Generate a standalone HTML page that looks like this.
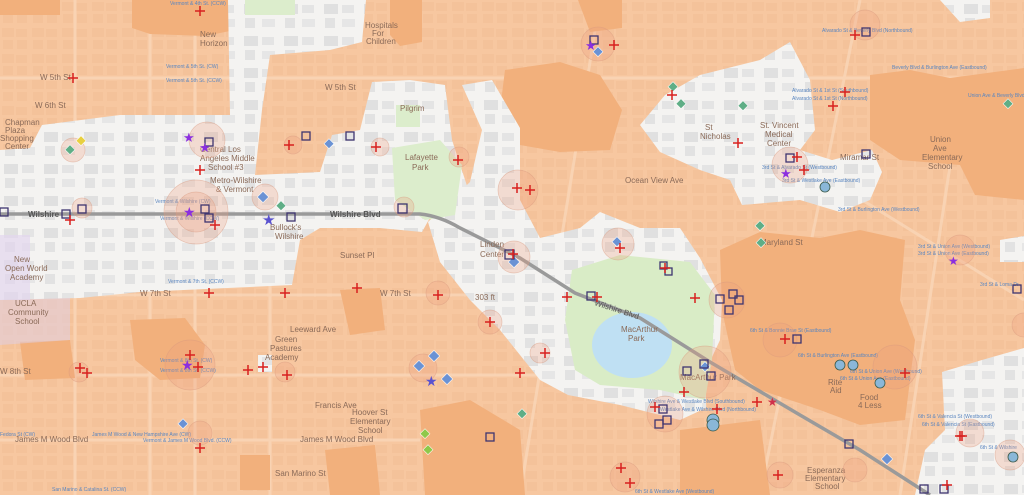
<!DOCTYPE html>
<html><head><meta charset="utf-8"><style>
html,body{margin:0;padding:0;width:1024px;height:495px;overflow:hidden;background:#f7c7a0;}
svg{display:block;font-family:"Liberation Sans",sans-serif;}
.lb{font-size:8px;fill:#8a6a58;}
.bl{font-size:5px;fill:#5a86c0;}
.wl{font-size:8px;fill:#555;}
</style></head><body>
<svg width="1024" height="495" viewBox="0 0 1024 495" xmlns="http://www.w3.org/2000/svg">
<defs>
<pattern id="blk" width="30" height="26" patternUnits="userSpaceOnUse">
<rect x="2" y="2" width="12" height="9" fill="#f0bc93" opacity=".45"/>
<rect x="16" y="3" width="11" height="8" fill="#f0bc93" opacity=".45"/>
<rect x="3" y="14" width="10" height="9" fill="#f0bc93" opacity=".45"/>
<rect x="17" y="14" width="10" height="9" fill="#f0bc93" opacity=".45"/>
</pattern>
<pattern id="gb" width="40" height="32" patternUnits="userSpaceOnUse">
<rect width="40" height="32" fill="#f4f3f1"/>
<rect x="4" y="4" width="14" height="10" fill="#e0e0e0"/>
<rect x="22" y="5" width="12" height="8" fill="#e4e4e4"/>
<rect x="5" y="18" width="10" height="10" fill="#e2e2e2"/>
<rect x="22" y="19" width="13" height="8" fill="#e6e6e6"/>
</pattern>
</defs>
<rect width="1024" height="495" fill="#f7c7a0"/>
<rect width="1024" height="495" fill="url(#blk)"/>
<g stroke="#fad7b8" stroke-width="3" opacity=".8">
<line x1="0" y1="78" x2="1024" y2="78"/><line x1="0" y1="295" x2="560" y2="295"/>
<line x1="0" y1="375" x2="540" y2="375"/><line x1="0" y1="440" x2="420" y2="440"/>
<line x1="75" y1="0" x2="75" y2="495"/><line x1="150" y1="0" x2="150" y2="495"/>
<line x1="195" y1="0" x2="195" y2="495"/><line x1="270" y1="230" x2="270" y2="495"/>
<line x1="600" y1="0" x2="520" y2="495"/><line x1="700" y1="100" x2="1024" y2="300"/>
<line x1="860" y1="0" x2="760" y2="495"/><line x1="960" y1="100" x2="900" y2="495"/>
</g>
<g fill="#f2b07c">
<path d="M132,0H235V30L205,36L150,34L132,28Z"/>
<path d="M390,0H422V42L400,46L390,35Z"/>
<path d="M578,0H622V28L590,32Z"/>
<path d="M505,70L560,62L600,75L622,110L610,150L560,152L520,145L500,110Z"/>
<path d="M870,75L910,70L950,78L1024,68V200L975,195L960,165L900,160L870,140Z"/>
<path d="M720,250L760,232L820,238L860,230L905,240L900,300L915,340L905,420L860,425L820,410L790,400L760,390L735,370L722,310Z"/>
<path d="M30,235L70,232L78,260L72,292L40,292L28,270Z"/>
<path d="M130,320L185,318L205,345L200,378L160,380L135,360Z"/>
<path d="M20,342L70,340L75,378L25,380Z"/>
<path d="M340,290L380,288L385,330L350,335Z"/>
<path d="M420,410L470,400L520,430L525,495H425Z"/>
<path d="M680,430L760,420L770,495H680Z"/>
<path d="M325,450L375,445L380,495H330Z"/>
<path d="M240,455L270,455L270,490L240,490Z"/>
<path d="M0,0H60V15H0Z"/>
</g>
<g fill="url(#gb)">
<path d="M0,150L30,148L42,125L120,115L230,115L228,0L366,0L362,42L330,50L270,55L262,110L255,175L320,172L332,135L360,130L372,82L410,80L445,85L452,140L470,195L432,214L422,232L380,228L320,228L300,240L292,285L140,292L80,298L0,300Z"/>
<path d="M428,222L470,182L482,130L462,85L492,80L520,128L520,200L540,238L580,228L600,212L640,228L680,228L700,258L722,300L720,340L706,370L706,408L680,420L620,405L568,395L540,380L500,330L470,300L440,262Z"/>
<path d="M665,95L700,75L760,60L790,42L810,80L815,130L800,150L832,160L872,150L882,172L870,200L840,212L800,200L742,205L730,180L700,170L660,152L640,125Z"/>
<path d="M942,372L982,360L1024,348V495H915L925,450L945,430Z"/>
<path d="M1000,240L1024,236V262L1000,262Z"/>
<path d="M940,0H990V18L960,22Z"/>
<path d="M258,355H272V372H258Z"/>
</g>
<path d="M0,235L30,235L30,300L0,300Z" fill="#e3d6ee" opacity=".7"/>
<path d="M0,300L70,298V340L0,345Z" fill="#ddd0ea" opacity=".5"/>
<path d="M392,148L440,140L462,165L455,215L425,220L395,200Z" fill="#dcedcc"/>
<rect x="396" y="105" width="24" height="22" fill="#dcedcc"/>
<rect x="245" y="0" width="50" height="15" fill="#dcedcc"/>
<path d="M572,270L620,255L690,262L715,295L712,360L705,400L660,390L600,385L575,370L565,320Z" fill="#d9ecc6"/>
<ellipse cx="632" cy="345" rx="40" ry="33" fill="#bfe0f3"/>
<path d="M0,214L420,214Q440,216 460,228L520,258L575,293L640,318L710,362L800,415L860,450L930,495" fill="none" stroke="#9a9a9a" stroke-width="3.5"/>
<text x="28" y="217" class="wl" font-weight="bold" fill="#444">Wilshire</text>
<text x="330" y="217" class="wl" font-weight="bold" fill="#444">Wilshire Blvd</text>
<text x="594" y="305" class="wl" fill="#444" transform="rotate(18 594 305)">Wilshire Blvd</text>
<text x="405" y="160" class="lb" fill="#777">Lafayette</text><text x="412" y="170" class="lb" fill="#777">Park</text>
<text x="621" y="332" class="lb" fill="#5b8a7a">MacArthur</text><text x="628" y="341" class="lb" fill="#5b8a7a">Park</text>
<text x="480" y="247" class="lb" fill="#777">Linden</text><text x="480" y="257" class="lb" fill="#777">Center</text>
<text x="760" y="128" class="lb" fill="#777">St. Vincent</text><text x="765" y="137" class="lb" fill="#777">Medical</text><text x="767" y="146" class="lb" fill="#777">Center</text>
<text x="705" y="130" class="lb" fill="#777">St</text><text x="700" y="139" class="lb" fill="#777">Nicholas</text>
<text x="400" y="111" class="lb" fill="#777">Pilgrim</text>
<text x="365" y="28" class="lb" fill="#8a8a9a">Hospitals</text><text x="372" y="36" class="lb" fill="#8a8a9a">For</text><text x="366" y="44" class="lb" fill="#8a8a9a">Children</text>
<text x="200" y="152" class="lb" fill="#777">Central Los</text><text x="200" y="161" class="lb" fill="#777">Angeles Middle</text><text x="208" y="170" class="lb" fill="#777">School #3</text>
<text x="210" y="183" class="lb" fill="#777">Metro-Wilshire</text><text x="216" y="192" class="lb" fill="#777">&amp; Vermont</text>
<text x="270" y="230" class="lb" fill="#777">Bullock's</text><text x="275" y="239" class="lb" fill="#777">Wilshire</text>
<text x="5" y="125" class="lb">Chapman</text><text x="5" y="133" class="lb">Plaza</text><text x="0" y="141" class="lb">Shopping</text><text x="5" y="149" class="lb">Center</text>
<text x="14" y="262" class="lb">New</text><text x="5" y="271" class="lb">Open World</text><text x="10" y="280" class="lb">Academy</text>
<text x="15" y="306" class="lb">UCLA</text><text x="8" y="315" class="lb">Community</text><text x="15" y="324" class="lb">School</text>
<text x="275" y="342" class="lb">Green</text><text x="270" y="351" class="lb">Pastures</text><text x="265" y="360" class="lb">Academy</text>
<text x="352" y="415" class="lb">Hoover St</text><text x="350" y="424" class="lb">Elementary</text><text x="358" y="433" class="lb">School</text>
<text x="200" y="37" class="lb">New</text><text x="200" y="46" class="lb">Horizon</text>
<text x="930" y="142" class="lb">Union</text><text x="933" y="151" class="lb">Ave</text><text x="922" y="160" class="lb">Elementary</text><text x="928" y="169" class="lb">School</text>
<text x="828" y="385" class="lb">Rite</text><text x="830" y="393" class="lb">Aid</text>
<text x="860" y="400" class="lb">Food</text><text x="858" y="408" class="lb">4 Less</text>
<text x="807" y="473" class="lb">Esperanza</text><text x="805" y="481" class="lb">Elementary</text><text x="815" y="489" class="lb">School</text>
<text x="680" y="380" class="lb">MacArthur Park</text>
<text x="40" y="80" class="lb">W 5th St</text><text x="325" y="90" class="lb">W 5th St</text>
<text x="35" y="108" class="lb">W 6th St</text><text x="0" y="374" class="lb">W 8th St</text>
<text x="140" y="296" class="lb">W 7th St</text><text x="380" y="296" class="lb">W 7th St</text>
<text x="340" y="258" class="lb">Sunset Pl</text><text x="290" y="332" class="lb">Leeward Ave</text>
<text x="315" y="408" class="lb">Francis Ave</text><text x="300" y="442" class="lb">James M Wood Blvd</text>
<text x="15" y="442" class="lb">James M Wood Blvd</text>
<text x="275" y="476" class="lb">San Marino St</text>
<text x="625" y="183" class="lb">Ocean View Ave</text>
<text x="840" y="160" class="lb">Miramar St</text>
<text x="760" y="245" class="lb">Maryland St</text>
<text x="475" y="300" class="lb" fill="#555">303 ft</text>
<text x="170" y="5" class="bl">Vermont &amp; 4th St. (CCW)</text>
<text x="166" y="68" class="bl">Vermont &amp; 5th St. (CW)</text>
<text x="166" y="82" class="bl">Vermont &amp; 5th St. (CCW)</text>
<text x="155" y="203" class="bl">Vermont &amp; Wilshire (CW)</text>
<text x="160" y="220" class="bl">Vermont &amp; Wilshire (CCW)</text>
<text x="168" y="283" class="bl">Vermont &amp; 7th St. (CCW)</text>
<text x="160" y="362" class="bl">Vermont &amp; 8th St. (CW)</text>
<text x="160" y="372" class="bl">Vermont &amp; 8th St. (CCW)</text>
<text x="92" y="436" class="bl">James M Wood &amp; New Hampshire Ave (CW)</text>
<text x="143" y="442" class="bl">Vermont &amp; James M Wood Blvd. (CCW)</text>
<text x="52" y="491" class="bl">San Marino &amp; Catalina St. (CCW)</text>
<text x="0" y="436" class="bl">Fedora St (CW)</text>
<text x="822" y="32" class="bl">Alvarado St &amp; Beverly Blvd (Northbound)</text>
<text x="792" y="92" class="bl">Alvarado St &amp; 1st St (Southbound)</text>
<text x="792" y="100" class="bl">Alvarado St &amp; 1st St (Northbound)</text>
<text x="892" y="69" class="bl">Beverly Blvd &amp; Burlington Ave (Eastbound)</text>
<text x="968" y="97" class="bl">Union Ave &amp; Beverly Blvd</text>
<text x="762" y="169" class="bl">3rd St &amp; Alvarado St (Westbound)</text>
<text x="782" y="182" class="bl">3rd St &amp; Westlake Ave (Eastbound)</text>
<text x="838" y="211" class="bl">3rd St &amp; Burlington Ave (Westbound)</text>
<text x="918" y="248" class="bl">3rd St &amp; Union Ave (Westbound)</text>
<text x="918" y="255" class="bl">3rd St &amp; Union Ave (Eastbound)</text>
<text x="980" y="286" class="bl">3rd St &amp; Loma Dr</text>
<text x="750" y="332" class="bl">6th St &amp; Bonnie Brae St (Eastbound)</text>
<text x="798" y="357" class="bl">6th St &amp; Burlington Ave (Eastbound)</text>
<text x="850" y="373" class="bl">6th St &amp; Union Ave (Westbound)</text>
<text x="840" y="380" class="bl">6th St &amp; Union Ave (Eastbound)</text>
<text x="648" y="403" class="bl">Wilshire Ave &amp; Westlake Blvd (Southbound)</text>
<text x="660" y="411" class="bl">Westlake Ave &amp; Wilshire Blvd (Northbound)</text>
<text x="918" y="418" class="bl">6th St &amp; Valencia St (Westbound)</text>
<text x="922" y="426" class="bl">6th St &amp; Valencia St (Eastbound)</text>
<text x="980" y="449" class="bl">6th St &amp; Wilshire</text>
<text x="635" y="493" class="bl">6th St &amp; Westlake Ave (Westbound)</text>
<g fill="#ec9f7d" fill-opacity=".28" stroke="#d99a80" stroke-opacity=".5" stroke-width=".7">
<circle cx="196" cy="212" r="32"/><circle cx="196" cy="212" r="20"/>
<circle cx="190" cy="365" r="25"/><circle cx="207" cy="140" r="18"/>
<circle cx="265" cy="197" r="13"/><circle cx="82" cy="208" r="10"/>
<circle cx="73" cy="150" r="12"/><circle cx="404" cy="207" r="10"/>
<circle cx="518" cy="190" r="20"/><circle cx="514" cy="257" r="16"/>
<circle cx="459" cy="157" r="10"/><circle cx="618" cy="244" r="16"/>
<circle cx="705" cy="372" r="26"/><circle cx="665" cy="414" r="18"/>
<circle cx="727" cy="300" r="18"/><circle cx="790" cy="165" r="18"/>
<circle cx="865" cy="25" r="15"/><circle cx="895" cy="367" r="22"/>
<circle cx="780" cy="340" r="17"/><circle cx="960" cy="250" r="15"/>
<circle cx="1010" cy="455" r="15"/><circle cx="540" cy="353" r="10"/>
<circle cx="490" cy="322" r="12"/><circle cx="438" cy="293" r="12"/>
<circle cx="598" cy="44" r="17"/><circle cx="625" cy="477" r="15"/>
<circle cx="970" cy="433" r="14"/><circle cx="1024" cy="325" r="12"/>
<circle cx="855" cy="470" r="12"/><circle cx="780" cy="475" r="13"/>
<circle cx="423" cy="368" r="14"/><circle cx="285" cy="372" r="10"/>
<circle cx="79" cy="372" r="10"/><circle cx="200" cy="433" r="12"/>
<circle cx="380" cy="147" r="9"/><circle cx="293" cy="145" r="9"/>
</g>
<g stroke="#fff" stroke-width=".5">
<g fill="#6a92d4">
<rect x="259" y="193" width="8" height="8" transform="rotate(45 263 197)"/>
<rect x="510" y="258" width="8" height="8" transform="rotate(45 514 262)"/>
<rect x="614" y="238" width="7" height="7" transform="rotate(45 617 241)"/>
<rect x="430" y="352" width="8" height="8" transform="rotate(45 434 356)"/>
<rect x="415" y="362" width="8" height="8" transform="rotate(45 419 366)"/>
<rect x="443" y="375" width="8" height="8" transform="rotate(45 447 379)"/>
<rect x="702" y="363" width="7" height="7" transform="rotate(45 705 366)"/>
<rect x="883" y="455" width="8" height="8" transform="rotate(45 887 459)"/>
<rect x="180" y="420" width="7" height="7" transform="rotate(45 183 423)"/>
<rect x="326" y="140" width="7" height="7" transform="rotate(45 329 143)"/>
<rect x="595" y="48" width="7" height="7" transform="rotate(45 598 51)"/>
</g>
<g fill="#5fae86">
<rect x="67" y="146" width="7" height="7" transform="rotate(45 70 149)"/>
<rect x="278" y="202" width="7" height="7" transform="rotate(45 281 205)"/>
<rect x="670" y="83" width="7" height="7" transform="rotate(45 673 86)"/>
<rect x="678" y="100" width="7" height="7" transform="rotate(45 681 103)"/>
<rect x="757" y="222" width="7" height="7" transform="rotate(45 760 225)"/>
<rect x="758" y="239" width="7" height="7" transform="rotate(45 761 242)"/>
<rect x="519" y="410" width="7" height="7" transform="rotate(45 522 413)"/>
<rect x="740" y="102" width="7" height="7" transform="rotate(45 743 105)"/>
<rect x="1005" y="100" width="7" height="7" transform="rotate(45 1008 103)"/>
</g>
<g fill="#8fc84a">
<rect x="422" y="430" width="7" height="7" transform="rotate(45 425 433)"/>
<rect x="425" y="446" width="7" height="7" transform="rotate(45 428 449)"/>
</g>
<rect x="78" y="137" width="7" height="7" fill="#e8d040" transform="rotate(45 81 140)"/>
</g>
<g fill="none" stroke="#3e3570" stroke-width="1.3">
<rect x="0" y="208" width="8" height="8"/><rect x="62" y="210" width="8" height="8"/><rect x="78" y="205" width="8" height="8"/>
<rect x="201" y="205" width="8" height="8"/><rect x="205" y="214" width="8" height="8"/><rect x="205" y="138" width="8" height="8"/>
<rect x="287" y="213" width="8" height="8"/><rect x="398" y="204" width="9" height="9"/><rect x="302" y="132" width="8" height="8"/>
<rect x="346" y="132" width="8" height="8"/><rect x="505" y="250" width="9" height="9"/><rect x="587" y="292" width="8" height="8"/>
<rect x="660" y="262" width="7" height="7"/><rect x="665" y="268" width="7" height="7"/>
<rect x="716" y="295" width="8" height="8"/><rect x="729" y="290" width="8" height="8"/><rect x="735" y="296" width="8" height="8"/><rect x="725" y="306" width="8" height="8"/>
<rect x="700" y="360" width="8" height="8"/><rect x="683" y="367" width="8" height="8"/><rect x="707" y="372" width="8" height="8"/>
<rect x="659" y="405" width="8" height="8"/><rect x="663" y="416" width="8" height="8"/><rect x="655" y="420" width="8" height="8"/>
<rect x="793" y="335" width="8" height="8"/><rect x="862" y="28" width="8" height="8"/><rect x="862" y="150" width="8" height="8"/>
<rect x="786" y="154" width="8" height="8"/><rect x="845" y="440" width="8" height="8"/>
<rect x="1013" y="285" width="8" height="8"/><rect x="486" y="433" width="8" height="8"/>
<rect x="590" y="36" width="8" height="8"/><rect x="940" y="485" width="8" height="8"/><rect x="920" y="485" width="8" height="8"/>
</g>
<g fill="#8ab7d8" stroke="#3b5a4a" stroke-width=".8">
<circle cx="825" cy="187" r="5"/><circle cx="840" cy="365" r="5"/><circle cx="853" cy="365" r="5"/><circle cx="880" cy="383" r="5"/>
<circle cx="713" cy="420" r="6"/><circle cx="713" cy="425" r="6"/><circle cx="1013" cy="457" r="5"/>
</g>
<g>
<text x="183" y="217" font-size="14" fill="#8b2fe0">★</text>
<text x="183" y="142" font-size="13" fill="#8b2fe0">★</text>
<text x="199" y="152" font-size="13" fill="#8b2fe0">★</text>
<text x="181" y="370" font-size="14" fill="#8b2fe0">★</text>
<text x="585" y="50" font-size="13" fill="#8b2fe0">★</text>
<text x="780" y="178" font-size="13" fill="#8b2fe0">★</text>
<text x="948" y="265" font-size="12" fill="#8b2fe0">★</text>
<text x="262" y="225" font-size="15" fill="#5a52d0">★</text>
<text x="425" y="386" font-size="14" fill="#5a52d0">★</text>
<text x="767" y="406" font-size="12" fill="#d0304a">★</text>
</g>
<g stroke="#d8201e" stroke-width="1.5" fill="none">
<path d="M-5,0H5M0,-5V5" transform="translate(70 220)"/>
<path d="M-5,0H5M0,-5V5" transform="translate(200 170)"/>
<path d="M-5,0H5M0,-5V5" transform="translate(289 145)"/>
<path d="M-5,0H5M0,-5V5" transform="translate(376 147)"/>
<path d="M-5,0H5M0,-5V5" transform="translate(517 188)"/>
<path d="M-5,0H5M0,-5V5" transform="translate(530 190)"/>
<path d="M-5,0H5M0,-5V5" transform="translate(513 254)"/>
<path d="M-5,0H5M0,-5V5" transform="translate(567 297)"/>
<path d="M-5,0H5M0,-5V5" transform="translate(597 297)"/>
<path d="M-5,0H5M0,-5V5" transform="translate(695 298)"/>
<path d="M-5,0H5M0,-5V5" transform="translate(620 248)"/>
<path d="M-5,0H5M0,-5V5" transform="translate(665 268)"/>
<path d="M-5,0H5M0,-5V5" transform="translate(684 392)"/>
<path d="M-5,0H5M0,-5V5" transform="translate(655 407)"/>
<path d="M-5,0H5M0,-5V5" transform="translate(717 409)"/>
<path d="M-5,0H5M0,-5V5" transform="translate(757 402)"/>
<path d="M-5,0H5M0,-5V5" transform="translate(738 143)"/>
<path d="M-5,0H5M0,-5V5" transform="translate(672 95)"/>
<path d="M-5,0H5M0,-5V5" transform="translate(833 106)"/>
<path d="M-5,0H5M0,-5V5" transform="translate(855 35)"/>
<path d="M-5,0H5M0,-5V5" transform="translate(797 157)"/>
<path d="M-5,0H5M0,-5V5" transform="translate(804 170)"/>
<path d="M-5,0H5M0,-5V5" transform="translate(785 339)"/>
<path d="M-5,0H5M0,-5V5" transform="translate(905 373)"/>
<path d="M-5,0H5M0,-5V5" transform="translate(962 436)"/>
<path d="M-5,0H5M0,-5V5" transform="translate(947 485)"/>
<path d="M-5,0H5M0,-5V5" transform="translate(614 45)"/>
<path d="M-5,0H5M0,-5V5" transform="translate(198 367)"/>
<path d="M-5,0H5M0,-5V5" transform="translate(190 355)"/>
<path d="M-5,0H5M0,-5V5" transform="translate(87 373)"/>
<path d="M-5,0H5M0,-5V5" transform="translate(80 368)"/>
<path d="M-5,0H5M0,-5V5" transform="translate(248 370)"/>
<path d="M-5,0H5M0,-5V5" transform="translate(263 367)"/>
<path d="M-5,0H5M0,-5V5" transform="translate(287 375)"/>
<path d="M-5,0H5M0,-5V5" transform="translate(200 448)"/>
<path d="M-5,0H5M0,-5V5" transform="translate(209 293)"/>
<path d="M-5,0H5M0,-5V5" transform="translate(285 293)"/>
<path d="M-5,0H5M0,-5V5" transform="translate(357 288)"/>
<path d="M-5,0H5M0,-5V5" transform="translate(438 295)"/>
<path d="M-5,0H5M0,-5V5" transform="translate(490 322)"/>
<path d="M-5,0H5M0,-5V5" transform="translate(545 353)"/>
<path d="M-5,0H5M0,-5V5" transform="translate(520 373)"/>
<path d="M-5,0H5M0,-5V5" transform="translate(621 468)"/>
<path d="M-5,0H5M0,-5V5" transform="translate(630 483)"/>
<path d="M-5,0H5M0,-5V5" transform="translate(778 475)"/>
<path d="M-5,0H5M0,-5V5" transform="translate(458 160)"/>
<path d="M-5,0H5M0,-5V5" transform="translate(73 78)"/>
<path d="M-5,0H5M0,-5V5" transform="translate(200 11)"/>
<path d="M-5,0H5M0,-5V5" transform="translate(845 92)"/>
<path d="M-5,0H5M0,-5V5" transform="translate(960 436)"/>
<path d="M-5,0H5M0,-5V5" transform="translate(215 225)"/>
</g>
</svg>
</body></html>
